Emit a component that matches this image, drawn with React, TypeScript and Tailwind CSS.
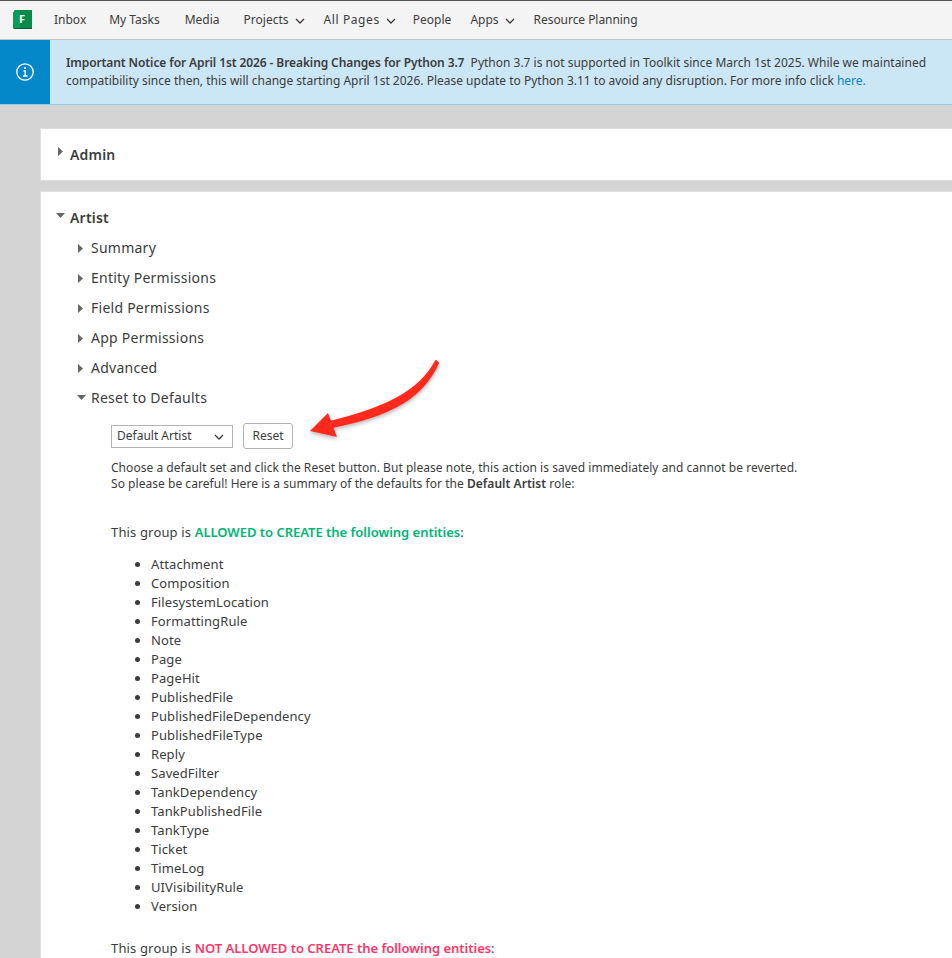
const font = { fontFamily: '"Noto Sans", sans-serif' };

function Chev() {
  return (
    <svg width="10" height="6" viewBox="0 0 10 6" className="ml-[6px] mt-[2px]">
      <path d="M1 1l4 4 4-4" fill="none" stroke="#3c3c3c" strokeWidth="1.3" />
    </svg>
  );
}

function Tri({ open }: { open?: boolean }) {
  return open ? (
    <svg width="9" height="6" viewBox="0 0 9 6"><path d="M0 0h9L4.5 5z" fill="#666" /></svg>
  ) : (
    <svg width="6" height="9" viewBox="0 0 6 9"><path d="M0 0l5 4.5L0 9z" fill="#666" /></svg>
  );
}

const sections = ["Summary", "Entity Permissions", "Field Permissions", "App Permissions", "Advanced"];
const entities = ["Attachment", "Composition", "FilesystemLocation", "FormattingRule", "Note", "Page", "PageHit", "PublishedFile", "PublishedFileDependency", "PublishedFileType", "Reply", "SavedFilter", "TankDependency", "TankPublishedFile", "TankType", "Ticket", "TimeLog", "UIVisibilityRule", "Version"];

export default function App() {
  return (
    <div className="relative h-[958px] w-[952px] overflow-hidden bg-[#d4d4d4] text-[#3c3c3c]" style={font}>
      <nav className="flex h-10 items-center border-t border-t-[#555] border-b border-b-[#c4c4c4] bg-[#f4f4f4] pl-3 text-xs">
        <svg width="20" height="20" viewBox="0 0 20 20" className="mr-[22px]">
          <path d="M3 0h17v18H1V3z" fill="#0a8a4a" />
          <path d="M1 3L3 0h5v18H1z" fill="#0e9a57" />
          <path d="M1 18h19v1H2z" fill="#0b5e36" />
          <text x="7" y="13" fontSize="11" fontWeight="700" fill="#fff">F</text>
        </svg>
        <span className="mr-[23px]">Inbox</span>
        <span className="mr-[25px]">My Tasks</span>
        <span className="mr-[24px]">Media</span>
        <span className="mr-[19px] flex items-center">Projects<Chev /></span>
        <span className="mr-[17px] flex items-center tracking-[0.6px]">All Pages<Chev /></span>
        <span className="mr-[19px]">People</span>
        <span className="mr-[19px] flex items-center">Apps<Chev /></span>
        <span className="tracking-[-0.05px]">Resource Planning</span>
      </nav>
      <div className="flex h-[65px] border-b border-[#8fcdee] bg-[#cbe6f4]">
        <div className="flex w-[50px] shrink-0 items-center justify-center bg-[#0588ca]">
          <svg width="20" height="20" viewBox="0 0 20 20" fill="none" stroke="#fff">
            <circle cx="10" cy="10" r="8.2" strokeWidth="1.3" />
            <path d="M8.5 9h1.7v5M8 14h4.4" strokeWidth="1.4" />
            <circle cx="10" cy="6" r="1" fill="#fff" stroke="none" />
          </svg>
        </div>
        <div className="min-w-0 flex-1 whitespace-nowrap pl-4 pt-[14px] text-xs leading-[18px]">
          <b className="font-semibold tracking-[-0.1px]">Important Notice for April 1st 2026 - Breaking Changes for Python 3.7</b>
          <span>&nbsp; Python 3.7 is not supported in Toolkit since March 1st 2025. While we maintained<br />compatibility since then, this will change starting April 1st 2026. Please update to Python 3.11 to avoid any disruption. For more info click </span>
          <span className="text-[#0a7fc2]">here.</span>
        </div>
      </div>
      <main className="ml-10 w-[1000px] pt-[23px]">
        <section className="flex h-[53px] items-center border border-[#dedede] bg-white pl-[17px]">
          <span className="mb-[6px] mr-[6px]"><Tri /></span>
          <h2 className="text-sm font-semibold tracking-[0.2px]">Admin</h2>
        </section>
        <section className="mt-[10px] h-[780px] border border-[#dedede] bg-white pl-[15px] pt-4">
          <div className="flex items-center">
            <span className="mb-[4px] mr-[5px]"><Tri open /></span>
            <h2 className="text-sm font-semibold leading-5 tracking-[0.2px]">Artist</h2>
          </div>
          <div className="ml-[21px] mt-[5px] text-sm tracking-[0.25px]">
            {sections.map((s) => (
              <div key={s} className="flex h-[30px] items-center pl-[1px]">
                <span className="mr-[7px]"><Tri /></span>{s}
              </div>
            ))}
            <div className="flex h-[30px] items-center">
              <span className="mr-[5px]"><Tri open /></span>Reset to Defaults
            </div>
          </div>
          <div className="ml-[55px] mt-[10px] text-xs">
            <div className="flex items-center">
              <div className="flex h-[23px] w-[122px] items-center justify-between border border-[#b4b4b4] pl-[5px] pr-[8px]">
                Default Artist<Chev />
              </div>
              <button className="ml-[10px] h-[26px] w-[50px] rounded-[3px] border border-[#b4b4b4]">Reset</button>
            </div>
            <p className="mt-[11px] leading-[16px] tracking-[0.04px]">
              Choose a default set and click the Reset button. But please note, this action is saved immediately and cannot be reverted.<br />
              So please be careful! Here is a summary of the defaults for the <b className="font-semibold">Default Artist</b> role:
            </p>
            <div className="text-[13px]">
              <p className="mt-[31px] leading-[18px] tracking-[0.15px]">
                This group is <b className="font-semibold tracking-[-0.02px] text-[#00b574]">ALLOWED to CREATE the following entities</b>:
              </p>
              <ul className="ml-10 mt-[14px] list-disc leading-[19px] tracking-[0.1px] marker:text-[#3c3c3c]">
                {entities.map((e) => <li key={e}>{e}</li>)}
              </ul>
              <p className="mt-[23px] leading-[18px] tracking-[0.15px]">
                This group is <b className="font-semibold tracking-[-0.02px] text-[#ff3566]">NOT ALLOWED to CREATE the following entities</b>:
              </p>
            </div>
          </div>
        </section>
      </main>
      <svg className="absolute left-[300px] top-[350px]" width="150" height="95" viewBox="0 0 150 95">
        <defs>
          <filter id="s" x="-20%" y="-20%" width="140%" height="140%">
            <feDropShadow dx="0" dy="2" stdDeviation="2" floodColor="#000" floodOpacity="0.3" />
          </filter>
        </defs>
        <g filter="url(#s)">
          <path d="M136 11C120 42 84 59 30 72l2 5C90 66 122 48 138 13z" fill="#ff2a1f" stroke="#ff2a1f" strokeWidth="2" strokeLinejoin="round" />
          <path d="M10 81L28 63l9 24z" fill="#ff2a1f" />
        </g>
      </svg>
    </div>
  );
}
